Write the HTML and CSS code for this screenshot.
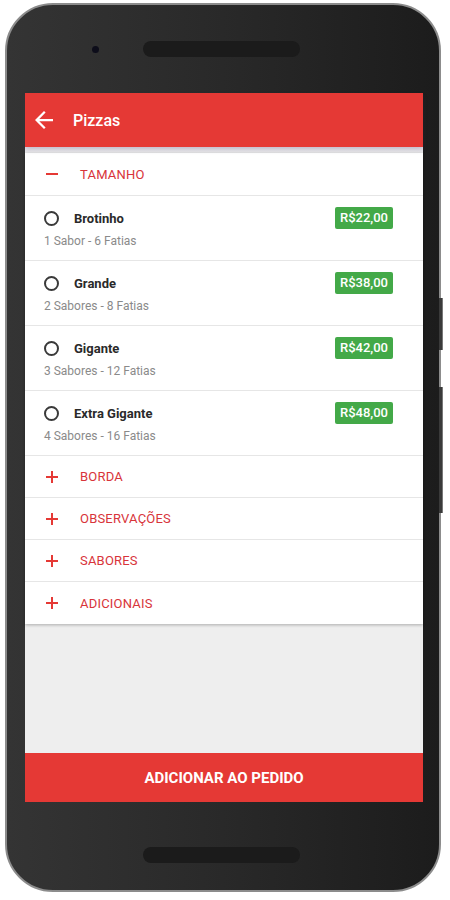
FILE: index.html
```html
<!DOCTYPE html>
<html lang="pt-BR">
<head>
  <meta charset="UTF-8">
  <meta name="viewport" content="width=device-width, initial-scale=1.0">
  <title>Pizzas</title>
  <link rel="stylesheet" href="styles.css">
</head>
<body>

<div class="phone">
  <span class="side-btn power"></span>
  <span class="side-btn volume"></span>

  <div class="bezel-top">
    <span class="camera"></span>
    <span class="speaker"></span>
  </div>

  <div class="screen">
    <div class="app-bar">
      <svg class="back" viewBox="4 4 16 16" width="18" height="18">
        <path d="M20 11H7.83l5.59-5.59L12 4l-8 8 8 8 1.41-1.41L7.83 13H20v-2z" fill="#fff"/>
      </svg>
      <span class="app-title">Pizzas</span>
    </div>

    <div class="content">
      <div class="card">
        <div class="section open">
          <span class="toggle minus"></span>
          <span class="section-title">TAMANHO</span>
        </div>

        <div class="option">
          <div class="option-top">
            <span class="radio"></span>
            <span class="option-name">Brotinho</span>
            <span class="price">R$22,00</span>
          </div>
          <div class="option-sub">1 Sabor - 6 Fatias</div>
        </div>
        <div class="option">
          <div class="option-top">
            <span class="radio"></span>
            <span class="option-name">Grande</span>
            <span class="price">R$38,00</span>
          </div>
          <div class="option-sub">2 Sabores - 8 Fatias</div>
        </div>
        <div class="option">
          <div class="option-top">
            <span class="radio"></span>
            <span class="option-name">Gigante</span>
            <span class="price">R$42,00</span>
          </div>
          <div class="option-sub">3 Sabores - 12 Fatias</div>
        </div>
        <div class="option">
          <div class="option-top">
            <span class="radio"></span>
            <span class="option-name">Extra Gigante</span>
            <span class="price">R$48,00</span>
          </div>
          <div class="option-sub">4 Sabores - 16 Fatias</div>
        </div>

        <div class="section">
          <span class="toggle plus"></span>
          <span class="section-title">BORDA</span>
        </div>
        <div class="section">
          <span class="toggle plus"></span>
          <span class="section-title">OBSERVAÇÕES</span>
        </div>
        <div class="section">
          <span class="toggle plus"></span>
          <span class="section-title">SABORES</span>
        </div>
        <div class="section last">
          <span class="toggle plus"></span>
          <span class="section-title">ADICIONAIS</span>
        </div>
      </div>
    </div>

    <button class="add-button">ADICIONAR AO PEDIDO</button>
  </div>

  <div class="bezel-bottom">
    <span class="speaker"></span>
  </div>
</div>

</body>
</html>
```

FILE: styles.css
```css
body {
  margin: 0;
  padding: 0;
  background: #fff;
  font-family: Roboto, "Liberation Sans", sans-serif;
}

.phone {
  position: relative;
  width: 436px;
  height: 889px;
  margin: 3px 0 0 5px;
  box-sizing: border-box;
  border: 2px solid #8c8c8c;
  border-radius: 48px;
  background: linear-gradient(90deg, #343434, #292929 50%, #1c1c1c);
  display: flex;
  flex-direction: column;
}

.side-btn {
  position: absolute;
  right: -4px;
  width: 3px;
  background: #3a3a3a;
  border-right: 1px solid #777;
}

.side-btn.power {
  top: 293px;
  height: 52px;
}

.side-btn.volume {
  top: 382px;
  height: 126px;
}

.bezel-top {
  height: 88px;
  display: flex;
  align-items: center;
  padding-left: 85px;
}

.camera {
  width: 7px;
  height: 7px;
  border-radius: 50%;
  background: #0d0d1a;
  margin-right: 44px;
}

.speaker {
  width: 157px;
  height: 16px;
  border-radius: 9px;
  background: #1b1b1b;
}

.screen {
  width: 398px;
  height: 709px;
  margin-left: 18px;
  display: flex;
  flex-direction: column;
  background: #eeeeee;
}

.app-bar {
  position: relative;
  z-index: 1;
  height: 54px;
  flex-shrink: 0;
  background: #e53935;
  display: flex;
  align-items: center;
  padding-left: 10px;
  box-shadow: 0 3px 5px rgba(60, 40, 90, 0.18);
}

.back {
  margin-right: 20px;
}

.app-title {
  color: #fff;
  font-size: 16px;
  font-weight: 500;
}

.content {
  flex: 1;
  padding-top: 6px;
  background: linear-gradient(#e2e0e8, #eeeeee 6px);
}

.card {
  background: #fff;
  box-shadow: 0 1px 3px rgba(0, 0, 0, 0.28);
}

.section {
  height: 41px;
  display: flex;
  align-items: center;
  border-bottom: 1px solid #e6e6e6;
}

.section.open {
  height: 42px;
}

.section.last {
  border-bottom: none;
  height: 42px;
}

.toggle {
  position: relative;
  width: 12px;
  height: 12px;
  margin-left: 21px;
  margin-right: 22px;
}

.toggle::before,
.toggle::after {
  content: "";
  position: absolute;
  background: #e53935;
}

.toggle::before {
  left: 0;
  top: 5px;
  width: 12px;
  height: 2px;
}

.plus::after {
  left: 5px;
  top: 0;
  width: 2px;
  height: 12px;
}

.minus::after {
  display: none;
}

.section-title {
  color: #d8343a;
  font-size: 13px;
  letter-spacing: 0.2px;
}

.option {
  height: 65px;
  box-sizing: border-box;
  padding: 11px 30px 0 19px;
  border-bottom: 1px solid #e6e6e6;
}

.option-top {
  height: 22px;
  display: flex;
  align-items: center;
}

.radio {
  width: 11px;
  height: 11px;
  border: 2px solid #3a3a3a;
  border-radius: 50%;
  margin-right: 15px;
}

.option-name {
  flex: 1;
  font-size: 13px;
  font-weight: 700;
  color: #2a2a2a;
}

.price {
  height: 22px;
  padding: 0 5px;
  line-height: 22px;
  border-radius: 2px;
  background: #43a948;
  color: #fff;
  font-size: 13px;
  font-weight: 500;
}

.option-sub {
  margin-top: 4px;
  font-size: 12px;
  line-height: 16px;
  color: #8a8a8a;
}

.add-button {
  height: 49px;
  flex-shrink: 0;
  border: none;
  background: #e53935;
  color: #fff;
  font-family: Roboto, "Liberation Sans", sans-serif;
  font-size: 15px;
  font-weight: 700;
  padding: 0;
}

.bezel-bottom {
  flex: 1;
  display: flex;
  justify-content: center;
  padding-top: 45px;
  padding-right: 3px;
}
```
